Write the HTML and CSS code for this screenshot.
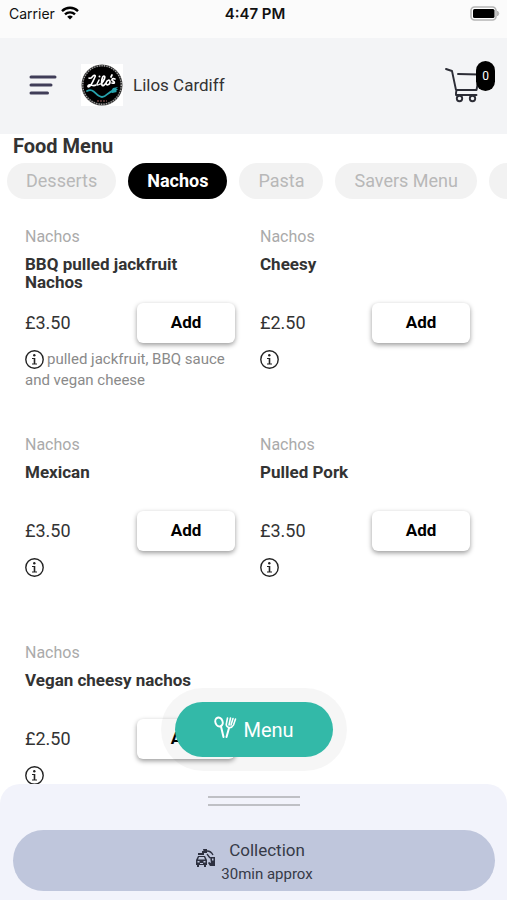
FILE: index.html
```html
<!DOCTYPE html>
<html lang="en">
    <head>
        <meta charset="utf-8">
        <meta name="viewport" content="width=device-width, initial-scale=1">
        <title>Lilos Cardiff</title>
        <link rel="stylesheet" href="styles.css">
    </head>
    <body>
        <svg class="sprite" aria-hidden="true">
            <symbol id="info" viewBox="0 0 20 20">
                <circle cx="9.500" cy="9.500" r="8.700" fill="none" stroke="currentColor" stroke-width="1.400"/>
                <circle cx="9.300" cy="5.300" r="1.200"/>
                <path d="M7 8.100h3.300v5.400h1.700v1H7v-1h1.700V9.100H7z"/>
            </symbol>
        </svg>

        <div class="status-bar">
            <div class="carrier">
                <span>Carrier</span>
                <svg width="18" height="14" viewBox="0 0 18 14" fill="none" stroke="#000" stroke-width="2.400">
                    <path d="M1 5.100a11.400 11.400 0 0 1 16 0"/>
                    <path d="M4 8.400a7.200 7.200 0 0 1 10 0"/>
                    <path d="M9 13.600L6.200 10.800a4 4 0 0 1 5.600 0z" fill="#000" stroke="none"/>
                </svg>
            </div>
            <span class="time">4:47 PM</span>
            <svg class="battery" width="31" height="15" viewBox="0 0 31 15">
                <rect x="1" y="1" width="25" height="13" rx="3.500" fill="#fff" stroke="#b5b5b5" stroke-width="1.600"/>
                <rect x="3" y="3" width="21.500" height="9" rx="1.500"/>
                <path d="M27.500 5q2.500 2.500 0 5z" fill="#b5b5b5" stroke="#b5b5b5"/>
            </svg>
        </div>

        <header class="header">
            <button class="icon-button" aria-label="Open menu">
                <svg width="28" height="20" viewBox="0 0 28 20" stroke="#403d58" stroke-width="3" stroke-linecap="round">
                    <path d="M2 2h24M2 10h20M2 18h16.500"/>
                </svg>
            </button>
            <svg class="logo" width="42" height="42" viewBox="0 0 42 42">
                <rect width="42" height="42" fill="#fff"/>
                <circle cx="21" cy="21" r="19.500" fill="#000" stroke="#333" stroke-width="2"/>
                <circle cx="21" cy="21" r="19.300" fill="none" stroke="#aaa" stroke-width="1.500" stroke-dasharray="1 1.500"/>
                <g fill="none" stroke="#fff" stroke-linecap="round" stroke-linejoin="round">
                    <path stroke-width="1.600" d="M8 14c2 1 3-1 4-2s3-1 2 1-3 7-5 9c-2 2-3 0-1-1s4 2 7 0"/>
                    <path stroke-width="1.500" d="M18 16l-2 4q0 2 3 0"/>
                    <path stroke-width="1.700" d="M20 20c3-3 5-8 3-8s-3 7-2 9 3-1 4-2c1-3 4-4 4-1s-4 4-4 1M31 11l-1 2M34 15c-3-1-4 1-2 2s2 3-1 2"/>
                </g>
                <circle cx="18.500" cy="12.500" r="1" fill="#fff"/>
                <path d="M6 27c7-4 9 6 15 6 5 0 6-6 12-6" fill="none" stroke="#26a3ad" stroke-width="1.800" stroke-linecap="round"/>
                <path d="M30 27l2-3 5-1-2 2 2 0-2 2 1 1-5 1z" fill="#26a3ad"/>
                <path d="M16 37h10" stroke="#6a4040" stroke-width="1.500" stroke-dasharray="2 1"/>
            </svg>
            <span class="shop-name">Lilos Cardiff</span>
            <button class="icon-button cart" aria-label="Basket">
                <svg width="38" height="38" viewBox="0 0 38 38" fill="none" stroke="#2c2d36" stroke-width="1.900" stroke-linecap="round" stroke-linejoin="round">
                    <path d="M1 3l6 2 4 19h20.500l3-16M13 8l21 .5M11.500 24l-.5 3v2h20.500"/>
                    <circle cx="14.500" cy="32.500" r="2.700"/>
                    <circle cx="27.500" cy="32.500" r="2.700"/>
                </svg>
                <span class="badge">0</span>
            </button>
        </header>

        <main class="content">
            <h2 class="title">Food Menu</h2>
            <nav class="tabs">
                <button class="tab">Desserts</button>
                <button class="tab active">Nachos</button>
                <button class="tab">Pasta</button>
                <button class="tab">Savers Menu</button>
                <button class="tab" aria-label="More"></button>
            </nav>

            <div class="items">
                <article class="item">
                    <div class="category">Nachos</div>
                    <h3 class="name">BBQ pulled jackfruit Nachos</h3>
                    <div class="buy">
                        <span class="price">£3.50</span>
                        <button class="add">Add</button>
                    </div>
                    <p class="details"><svg class="info"><use href="#info"/></svg>pulled jackfruit, BBQ sauce and vegan cheese</p>
                </article>
                <article class="item">
                    <div class="category">Nachos</div>
                    <h3 class="name">Cheesy</h3>
                    <div class="buy">
                        <span class="price">£2.50</span>
                        <button class="add">Add</button>
                    </div>
                    <p class="details"><svg class="info"><use href="#info"/></svg></p>
                </article>
                <article class="item">
                    <div class="category">Nachos</div>
                    <h3 class="name">Mexican</h3>
                    <div class="buy">
                        <span class="price">£3.50</span>
                        <button class="add">Add</button>
                    </div>
                    <p class="details"><svg class="info"><use href="#info"/></svg></p>
                </article>
                <article class="item">
                    <div class="category">Nachos</div>
                    <h3 class="name">Pulled Pork</h3>
                    <div class="buy">
                        <span class="price">£3.50</span>
                        <button class="add">Add</button>
                    </div>
                    <p class="details"><svg class="info"><use href="#info"/></svg></p>
                </article>
                <article class="item">
                    <div class="category">Nachos</div>
                    <h3 class="name">Vegan cheesy nachos</h3>
                    <div class="buy">
                        <span class="price">£2.50</span>
                        <button class="add">Add</button>
                    </div>
                    <p class="details"><svg class="info"><use href="#info"/></svg></p>
                </article>
            </div>
        </main>

        <footer class="sheet">
            <button class="menu-button">
                <svg class="cutlery" width="24" height="24" viewBox="0 0 24 24" fill="none" stroke="#fff" stroke-width="2" stroke-linecap="round">
                    <ellipse cx="6" cy="6" rx="3.600" ry="4.500" transform="rotate(-20 6 6)"/>
                    <path d="M8 10.500L10.500 21M16 12l-2.500 9"/>
                    <path stroke-width="1.600" d="M14.500 2l-1 5q-1 3.500 2.500 4.500 3 .5 4.500-2.500L22.500 3M17.500 2l-1.500 7M20 2.500L18 9"/>
                </svg>
                <span>Menu</span>
            </button>
            <div class="handle"></div>
            <button class="collection">
                <svg width="21" height="20" viewBox="0 0 21 20" fill="#2d3040">
                    <path d="M1 12l2-4h7l2 4v5h-1v2H9v-2H4v2H2v-2H1zM4 9l-1 2.500h7L9 9zM2.500 13v1.500h2V13zM8.500 13v1.500h2V13zM5 15v1h3v-1z" fill-rule="evenodd"/>
                    <path d="M3 7V5h4V3h2v4zM8 1h4v4H9z"/>
                    <path d="M12 3q4 0 6 4M12 6l3 4" fill="none" stroke="#2d3040" stroke-width="1.300"/>
                    <path d="M15 9h5v9h-5l-2-3 1-1 2 1zM17 10.500v2h1.500v-2z" fill-rule="evenodd"/>
                </svg>
                <span class="collection-text">
                    <span class="collection-title">Collection</span>
                    <span class="collection-time">30min approx</span>
                </span>
            </button>
        </footer>
    </body>
</html>
```

FILE: styles.css
```css
* {
    box-sizing: border-box;
}
body {
    margin: 0;
    height: 100vh;
    display: flex;
    flex-direction: column;
    overflow: hidden;
    background-color: #fff;
    color: #333;
    font-family: Roboto, sans-serif;
}
button {
    border: none;
    padding: 0;
    font-family: inherit;
    color: inherit;
    cursor: pointer;
}
.sprite {
    position: absolute;
    width: 0;
    height: 0;
}

/* status bar */
.status-bar {
    display: grid;
    grid-template-columns: 1fr auto 1fr;
    align-items: center;
    height: 38px;
    padding: 0 6px 12px 9px;
    background-color: #fbfbfb;
    color: #111;
    font-family: Inter, sans-serif;
    font-size: 14px;
}
.carrier {
    display: flex;
    align-items: center;
    gap: 6px;
}
.time {
    font-size: 15px;
    font-weight: 600;
}
.battery {
    justify-self: end;
}

/* header */
.header {
    display: flex;
    align-items: center;
    height: 96px;
    padding: 0 12px 2px 29px;
    background-color: #f3f4f6;
}
.icon-button {
    display: flex;
    background: none;
}
.logo {
    margin: 0 10px 0 24px;
}
.shop-name {
    font-size: 17px;
}
.cart {
    position: relative;
    margin-left: auto;
    padding-right: 12px;
}
.badge {
    position: absolute;
    top: -5px;
    right: 0;
    width: 19px;
    padding: 8px 0;
    border-radius: 10px;
    background-color: #000;
    color: #fff;
    font-size: 12px;
    line-height: 14px;
}

/* menu */
.content {
    flex: 1;
    min-height: 0;
    overflow: hidden;
}
.title {
    margin: 0 0 5px;
    padding-left: 13px;
    font-size: 20px;
    line-height: 24px;
}
.tabs {
    display: flex;
    gap: 12px;
    padding-left: 7px;
    overflow: hidden;
}
.tab {
    flex: none;
    height: 36px;
    min-width: 80px;
    padding: 0 19px 2px;
    border-radius: 18px;
    background-color: #f2f2f2;
    color: #b8b8b8;
    font-size: 18px;
}
.tab.active {
    background-color: #000;
    color: #fff;
    font-weight: bold;
}
.items {
    display: grid;
    grid-template-columns: 1fr 1fr;
    grid-auto-rows: 208px;
    column-gap: 25px;
    padding: 28px 37px 0 25px;
}
.category {
    color: #aaa;
    font-size: 16px;
    line-height: 20px;
}
.name {
    height: 36px;
    margin: 8px 0 12px;
    font-size: 17px;
    line-height: 18px;
}
.buy {
    display: flex;
    align-items: center;
    justify-content: space-between;
}
.price {
    padding-bottom: 2px;
    font-size: 18px;
}
.add {
    width: 98px;
    height: 40px;
    padding-bottom: 2px;
    border-radius: 6px;
    background-color: #fff;
    box-shadow: 0 2px 5px rgba(0, 0, 0, 0.4);
    color: #000;
    font-size: 17px;
    font-weight: bold;
}
.details {
    margin: 6px 0 0;
    color: #8a8a8a;
    font-size: 15px;
    line-height: 20px;
}
.info {
    width: 20px;
    height: 20px;
    margin-right: 2px;
    color: #222;
    fill: #222;
    vertical-align: middle;
}

/* bottom sheet */
.sheet {
    position: relative;
    padding: 12px 12px 9px 13px;
    border-radius: 20px 20px 0 0;
    background-color: #f2f3fb;
}
.menu-button {
    position: absolute;
    bottom: 100%;
    left: 50%;
    display: flex;
    align-items: center;
    justify-content: center;
    gap: 6px;
    width: 158px;
    height: 55px;
    margin-bottom: 27px;
    transform: translateX(-50%);
    border-radius: 28px;
    background-color: #33b9a8;
    box-shadow: 0 0 0 14px rgba(0, 0, 0, 0.035);
    color: #fff;
    font-size: 20px;
}
.cutlery {
    margin-bottom: 4px;
}
.handle {
    width: 92px;
    height: 10px;
    margin: 0 auto 24px;
    border-top: 2px solid #bfc0c5;
    border-bottom: 2px solid #bfc0c5;
}
.collection {
    display: flex;
    align-items: center;
    justify-content: center;
    gap: 5px;
    width: 100%;
    height: 61px;
    border-radius: 31px;
    background-color: #bfc6dc;
    color: #363a47;
}
.collection > svg {
    margin-bottom: 5px;
}
.collection-text {
    display: flex;
    flex-direction: column;
}
.collection-title {
    font-size: 17px;
    line-height: 26px;
}
.collection-time {
    font-size: 15px;
    line-height: 22px;
}
```
